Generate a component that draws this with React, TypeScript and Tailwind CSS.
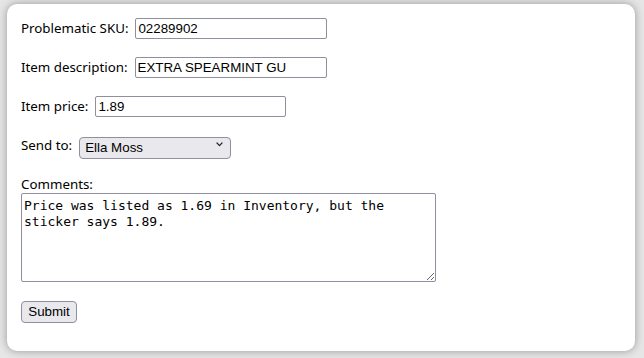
import React from "react";

const labelFont = "font-['Noto_Sans',sans-serif] text-[13.33px] text-black";
const fieldFont = "font-['Liberation_Sans',Arial,sans-serif] text-[13.33px] text-black";

function TextRow({ label, value, width }: { label: string; value: string; width: string }) {
  return (
    <div className="flex items-center h-[21px] mb-[18px]">
      <label className={`${labelFont} mr-[7px]`}>{label}</label>
      <input
        type="text"
        defaultValue={value}
        className={`${fieldFont} ${width} h-[21px] border border-[#8f8f9d] rounded-[2px] px-[2px] bg-white outline-none`}
      />
    </div>
  );
}

export default function App() {
  return (
    <div className="w-[644px] h-[358px] bg-[#e6e6e6] pt-[4px] pl-[7px] overflow-hidden">
      <div className="w-[628px] h-[347px] bg-white rounded-[10px] shadow-[0_0_9px_rgba(0,0,0,0.35)] pt-[14px] pl-[14px]">
        <TextRow label="Problematic SKU:" value="02289902" width="w-[192px]" />
        <TextRow label="Item description:" value="EXTRA SPEARMINT GU" width="w-[192px]" />
        <TextRow label="Item price:" value="1.89" width="w-[191px]" />

        {/* send to */}
        <div className="flex items-center h-[22px]">
          <label className={`${labelFont} mr-[7px]`}>Send to:</label>
          <div className="relative">
            <select
              defaultValue="ella"
              className={`${fieldFont} appearance-none w-[152px] h-[22px] bg-[#e9e9ed] border border-[#8f8f9d] rounded-[4px] pl-[5px] outline-none`}
            >
              <option value="ella">Ella Moss</option>
            </select>
            <svg
              className="absolute right-[8px] top-[8px] pointer-events-none"
              width="7"
              height="5"
              viewBox="0 0 7 5"
              fill="none"
            >
              <path d="M1 1 L3.5 3.6 L6 1" stroke="#222" strokeWidth="1.2" strokeLinecap="round" strokeLinejoin="round" />
            </svg>
          </div>
        </div>

        {/* comments */}
        <div className="mt-[19px]">
          <div className={`${labelFont} leading-[17px]`}>Comments:</div>
          <textarea
            defaultValue="Price was listed as 1.69 in Inventory, but the sticker says 1.89."
            className="block w-[415px] h-[89px] border border-[#8f8f9d] rounded-[2px] px-[2px] pt-[4px] font-['DejaVu_Sans_Mono',monospace] text-[13px] leading-[16px] text-black outline-none resize"
          />
        </div>

        <button
          className={`${fieldFont} mt-[19px] h-[22px] w-[56px] bg-[#e9e9ed] border border-[#8f8f9d] rounded-[4px]`}
        >
          Submit
        </button>
      </div>
    </div>
  );
}
